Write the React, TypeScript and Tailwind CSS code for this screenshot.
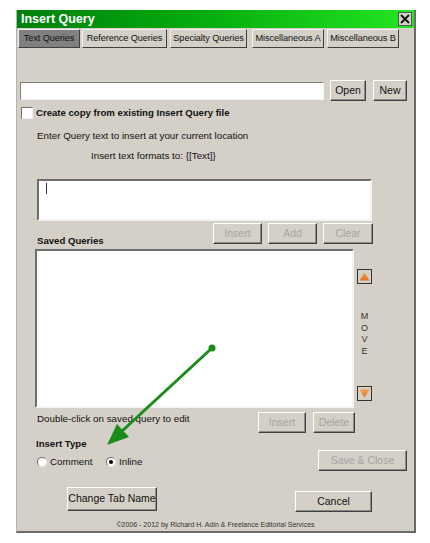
import React from "react";

const raised =
  "bg-[#d4d0c8] border border-t-white border-l-white border-r-[#404040] border-b-[#404040] shadow-[inset_-1px_-1px_0_#8a8a8a]";
const sunken = "bg-white border border-t-[#808080] border-l-[#808080] border-r-[#f4f4f4] border-b-[#f4f4f4]";

function Button({ label, className, disabled }: { label: string; className: string; disabled?: boolean }) {
  return (
    <div
      className={`${raised} ${className} flex items-center justify-center whitespace-nowrap text-[10.5px] ${
        disabled ? "text-[#a4a4a4]" : "text-[#111]"
      }`}
    >
      {label}
    </div>
  );
}

function Tab({ label, className, active }: { label: string; className: string; active?: boolean }) {
  return (
    <div
      className={`h-[19px] flex items-center justify-center whitespace-nowrap tracking-[-0.1px] text-[9.2px] border border-t-[#f0f0f0] border-l-[#f0f0f0] border-r-[#404040] border-b-[#404040] ${
        active ? "bg-[#808080] text-[#111]" : "bg-[#d4d0c8] text-[#111]"
      } ${className}`}
    >
      {label}
    </div>
  );
}

function Radio({ checked }: { checked?: boolean }) {
  return (
    <div className="w-[10px] h-[10px] rounded-full bg-white border border-t-[#707070] border-l-[#707070] border-r-[#e8e8e8] border-b-[#e8e8e8] flex items-center justify-center">
      {checked && <div className="w-[4px] h-[4px] rounded-full bg-black" />}
    </div>
  );
}

function MoveButton({ up }: { up?: boolean }) {
  return (
    <div className="w-[15px] h-[15px] border border-[#333] bg-[#d4d0c8] flex items-center justify-center">
      <svg width="11" height="9" viewBox="0 0 11 9">
        <defs>
          <linearGradient id={up ? "gu" : "gd"} x1="0" y1="0" x2="0" y2="1">
            <stop offset="0" stopColor="#f7a14a" />
            <stop offset="1" stopColor="#e8701a" />
          </linearGradient>
        </defs>
        <polygon points={up ? "5.5,0.5 10.5,8.5 0.5,8.5" : "0.5,0.5 10.5,0.5 5.5,8.5"} fill={`url(#${up ? "gu" : "gd"})`} />
      </svg>
    </div>
  );
}

export default function App() {
  return (
    <div className="min-h-[543px] bg-white pt-[10px] pl-[16px] font-['Liberation_Sans',Arial,sans-serif] text-[#111]">
      <div className="relative w-[400px] h-[523px] bg-[#d4d0c8] border-r-2 border-b-2 border-l border-r-[#6a6a6a] border-b-[#6a6a6a] border-l-[#b8b4ac]">
        {/* title bar */}
        <div className="h-[18px] flex items-center justify-between pl-[4px] pr-[2px] bg-linear-to-r from-[#00800c] via-[#06b00e] to-[#22e622]">
          <span className="text-white font-bold text-[12.5px] leading-none">Insert Query</span>
          <div className="w-[14px] h-[14px] bg-[#d4d0c8] border border-[#555] flex items-center justify-center">
            <svg width="10" height="10" viewBox="0 0 10 10">
              <path d="M1 1 L9 9 M9 1 L1 9" stroke="#111" strokeWidth="1.8" />
            </svg>
          </div>
        </div>

        {/* tabs */}
        <div className="flex pl-[1px] pt-[1px]">
          <Tab label="Text Queries" className="w-[62px]" active />
          <Tab label="Reference Queries" className="w-[85px] ml-[2px]" />
          <Tab label="Specialty Queries" className="w-[77px] ml-[3px]" />
          <Tab label="Miscellaneous A" className="w-[72px] ml-[5px]" />
          <Tab label="Miscellaneous B" className="w-[72px] ml-[3px]" />
        </div>

        {/* file row */}
        <div className="flex items-center h-[21px] mt-[32px] pl-[3px]">
          <div className={`${sunken} w-[304px] h-[18px]`} />
          <Button label="Open" className="w-[36px] h-[21px] ml-[6px]" />
          <Button label="New" className="w-[34px] h-[21px] ml-[7px]" />
        </div>

        <div className="flex items-center h-[12px] mt-[6px] pl-[4px]">
          <div className="w-[12px] h-[12px] bg-white border border-t-[#707070] border-l-[#707070] border-r-[#eee] border-b-[#eee]" />
          <span className="ml-[3px] text-[9.6px] font-bold leading-none">Create copy from existing Insert Query file</span>
        </div>

        <div className="mt-[11px] pl-[20px] h-[12px] text-[9.8px] leading-[12px]">Enter Query text to insert at your current location</div>
        <div className="mt-[8px] pl-[74px] h-[12px] text-[9.8px] leading-[12px]">Insert text formats to: {"{[Text]}"}</div>

        {/* query text */}
        <div className="mt-[17px] pl-[20px]">
          <div className="w-[335px] h-[42px] bg-white border-2 border-t-[#6e6e6e] border-l-[#6e6e6e] border-r-[#f4f4f4] border-b-[#f4f4f4] pl-[7px] pt-[2px]">
            <div className="w-px h-[11px] bg-[#333]" />
          </div>
        </div>

        <div className="flex h-[24px] mt-[2px]">
          <div className="w-[196px] pl-[20px] self-end text-[9.6px] font-bold leading-[12px]">Saved Queries</div>
          <Button label="Insert" className="w-[49px] h-[21px]" disabled />
          <Button label="Add" className="w-[49px] h-[21px] ml-[6px]" disabled />
          <Button label="Clear" className="w-[50px] h-[21px] ml-[6px]" disabled />
        </div>

        {/* saved list */}
        <div className="flex mt-[2px] h-[159px] pl-[18px]">
          <div className="w-[319px] h-full bg-white border-2 border-t-[#6e6e6e] border-l-[#6e6e6e] border-r-[#f4f4f4] border-b-[#f4f4f4]" />
          <div className="ml-[3px] w-[15px] flex flex-col items-center pt-[20px] pb-[7px]">
            <MoveButton up />
            <div className="mt-[27px] flex flex-col items-center text-[9px] leading-[11.7px] text-[#333]">
              <span>M</span>
              <span>O</span>
              <span>V</span>
              <span>E</span>
            </div>
            <div className="mt-auto">
              <MoveButton />
            </div>
          </div>
        </div>

        <div className="flex h-[21px] mt-[4px]">
          <div className="w-[241px] pl-[20px] pt-[1px] text-[9.8px] leading-[12px]">Double-click on saved query to edit</div>
          <Button label="Insert" className="w-[48px] h-[21px]" disabled />
          <Button label="Delete" className="w-[42px] h-[21px] ml-[7px]" disabled />
        </div>

        <div className="flex mt-[5px] h-[33px]">
          <div className="w-[301px] flex flex-col">
            <div className="pl-[19px] h-[12px] text-[9.6px] font-bold leading-[12px]">Insert Type</div>
            <div className="flex items-center mt-[6px] pl-[20px] h-[12px] text-[9.8px]">
              <div className="flex items-center w-[69px]">
                <Radio />
                <span className="ml-[3px]">Comment</span>
              </div>
              <Radio checked />
              <span className="ml-[3px]">Inline</span>
            </div>
          </div>
          <Button label="Save & Close" className="w-[89px] h-[21px] mt-[12px]" disabled />
        </div>

        <div className="flex mt-[16px] h-[25px]">
          <Button label="Change Tab Name" className="w-[90px] h-[24px] ml-[50px]" />
          <Button label="Cancel" className="w-[77px] h-[21px] ml-[138px] mt-[4px]" />
        </div>

        <div className="mt-[9px] text-center text-[7px] leading-[8px] text-[#333]">
          ©2006 - 2012 by Richard H. Adin &amp; Freelance Editorial Services
        </div>

        {/* annotation arrow */}
        <svg className="absolute left-0 top-0 pointer-events-none" width="400" height="523" viewBox="0 0 400 523">
          <line x1="195" y1="338" x2="104" y2="422" stroke="#1a8c1a" strokeWidth="3" strokeLinecap="round" />
          <circle cx="195" cy="338" r="3.5" fill="#1a8c1a" />
          <polygon points="90,435 100,414 112,427" fill="#1a8c1a" />
        </svg>
      </div>
    </div>
  );
}
